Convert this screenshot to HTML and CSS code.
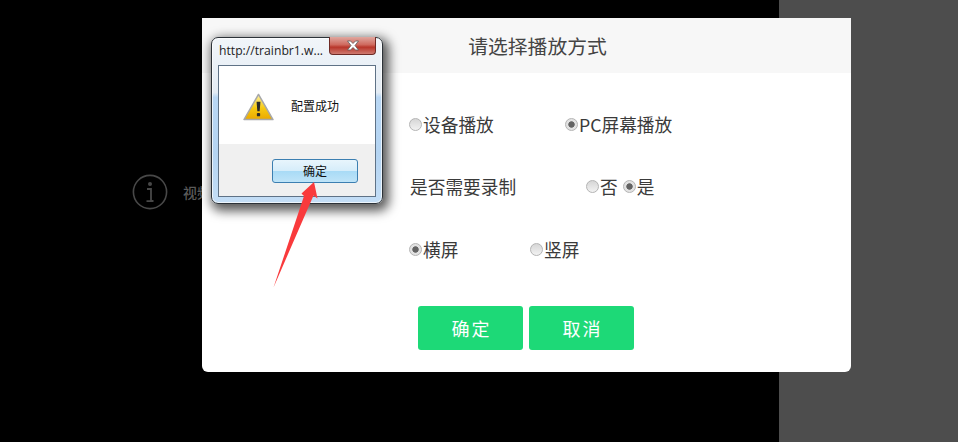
FILE: index.html
```html
<!DOCTYPE html>
<html lang="zh-CN">
<head>
<meta charset="utf-8">
<title>请选择播放方式</title>
<link rel="stylesheet" href="styles.css">
</head>
<body>
<div class="page">
  <main class="stage">
    <div class="notice">
      <svg class="notice-icon" viewBox="0 0 36 36" aria-hidden="true">
        <circle cx="18" cy="18" r="16.6" fill="none" stroke="#484848" stroke-width="1.6"/>
        <circle cx="18" cy="10" r="2" fill="#484848"/>
        <path d="M15 15h4v12h2.500M14.500 27.200h7" fill="none" stroke="#484848" stroke-width="1.800"/>
      </svg>
      <span class="notice-text">视频未开始</span>
    </div>
  </main>
  <aside class="side"></aside>

  <section class="modal">
    <h1 class="modal-title">请选择播放方式</h1>
    <div class="modal-body">
      <div class="row row-one">
        <label class="opt opt-device"><input type="radio" name="mode">设备播放</label>
        <label class="opt"><input type="radio" name="mode" checked>PC屏幕播放</label>
      </div>
      <div class="row row-two">
        <span class="row-label">是否需要录制</span>
        <label class="opt opt-no"><input type="radio" name="rec">否</label>
        <label class="opt"><input type="radio" name="rec" checked>是</label>
      </div>
      <div class="row row-three">
        <label class="opt opt-land"><input type="radio" name="dir" checked>横屏</label>
        <label class="opt"><input type="radio" name="dir">竖屏</label>
      </div>
    </div>
    <div class="actions">
      <button class="btn" type="button">确定</button>
      <button class="btn" type="button">取消</button>
    </div>
  </section>

  <div class="alert">
    <div class="alert-bar">
      <span class="alert-title">http://trainbr1.w...</span>
      <span class="alert-close">
        <svg viewBox="0 0 14 11" class="close-x" aria-hidden="true">
          <path d="M1.500 1h3l2.500 2.500L9.500 1h3L9 5.500l3.500 4.500h-3L7 7.500 4.500 10h-3L5 5.500z" fill="#fff" stroke="#5a5a5a" stroke-width=".8"/>
        </svg>
      </span>
    </div>
    <div class="alert-panel">
      <div class="alert-content">
        <svg class="warn" viewBox="0 0 32 29" aria-hidden="true">
          <defs>
            <linearGradient id="warnFill" x1="0" y1="0" x2="0" y2="1">
              <stop offset="0" stop-color="#fff3a0"/>
              <stop offset=".55" stop-color="#f6c911"/>
              <stop offset="1" stop-color="#eaa800"/>
            </linearGradient>
          </defs>
          <path d="M16 1.500 31 27.500H1z" fill="url(#warnFill)" stroke="#a8a8a8" stroke-width="1.600" stroke-linejoin="round"/>
          <path d="M14 9h4l-.8 10h-2.400z" fill="#2a2a2a"/>
          <rect x="14.300" y="20.600" width="3.400" height="3.600" rx="1" fill="#2a2a2a"/>
        </svg>
        <span class="alert-msg">配置成功</span>
      </div>
      <div class="alert-foot">
        <button class="alert-btn" type="button">确定</button>
      </div>
    </div>
  </div>

  <svg class="arrow" viewBox="0 0 958 442" aria-hidden="true">
    <path d="M314 182 317.500 198.500 313.500 195.500 273.500 287.500 304 196 301.500 193.500z" fill="#f93a3c"/>
  </svg>
</div>
</body>
</html>
```

FILE: styles.css
```css
* { box-sizing: border-box; }
html, body { margin: 0; height: 100%; }
body {
  overflow: hidden;
  font-family: "Noto Sans CJK SC", "Noto Sans", sans-serif;
}
.page {
  position: relative;
  display: flex;
  width: 958px;
  height: 442px;
  background: #000;
}
.stage {
  width: 779px;
  background: #000;
  padding: 174px 0 0 132px;
}
.side {
  flex: 1;
  background: #4d4d4d;
}
.notice {
  display: flex;
  align-items: center;
  gap: 15px;
}
.notice-icon { width: 36px; height: 36px; }
.notice-text {
  color: #5a5a5a;
  font-size: 14px;
  font-weight: 500;
  white-space: nowrap;
}

.modal {
  position: absolute;
  left: 202px;
  top: 18px;
  width: 649px;
  height: 354px;
  background: #fff;
  border-radius: 0 0 6px 6px;
}
.modal-title {
  margin: 0;
  height: 55px;
  padding-left: 22px;
  background: #f7f7f7;
  color: #444;
  font-size: 19.800px;
  font-weight: 400;
  line-height: 55px;
  text-align: center;
}
.modal-body {
  display: flex;
  flex-direction: column;
  padding: 38px 0 0 207px;
  gap: 36px;
}
.row {
  display: flex;
  align-items: center;
  height: 26px;
  color: #3a3a3a;
  font-size: 17.700px;
  line-height: 26px;
}
.row-three { margin-top: 1px; }
.opt { display: flex; align-items: center; }
.opt input {
  appearance: none;
  flex: none;
  width: 13px;
  height: 13px;
  margin: 0 1px 0 0;
  border: 1px solid #b4b4b4;
  border-radius: 50%;
  background: linear-gradient(#d6d6d6, #f2f2f2);
}
.opt input:checked {
  background: radial-gradient(circle, #636363 0, #636363 2.800px, #e2e2e2 3.600px);
}
.opt-device { width: 156px; }
.row-label { width: 177px; padding-left: 1px; }
.opt-no { margin-right: 5px; }
.opt-land { width: 121px; }

.actions {
  display: flex;
  gap: 6px;
  padding: 44px 0 0 216px;
}
.btn {
  width: 105px;
  height: 44px;
  padding: 0 0 0 2px;
  border: 0;
  border-radius: 3px;
  background: #1dd977;
  color: #fff;
  font-family: inherit;
  font-size: 18px;
  letter-spacing: 2px;
}

.alert {
  position: absolute;
  left: 211px;
  top: 37px;
  width: 172px;
  height: 167px;
  padding: 0 6px 6px 6px;
  display: flex;
  flex-direction: column;
  border: 1px solid #2c3238;
  border-radius: 7px;
  background: linear-gradient(#f1f5f9 0, #e4ecf4 33%, #b9d7f4 36%, #b4d4f2 70%, #c4def6 100%);
  box-shadow: inset 0 0 0 1px rgba(255, 255, 255, .7), 3px 4px 11px 3px rgba(0, 0, 0, .65);
}
.alert-bar {
  display: flex;
  justify-content: space-between;
  height: 27px;
  flex: none;
}
.alert-title {
  padding: 4px 0 0 1px;
  color: #1d1d1d;
  font-family: "Open Sans", sans-serif;
  font-size: 12.200px;
  line-height: 18px;
  white-space: nowrap;
}
.alert-close {
  display: flex;
  align-items: center;
  justify-content: center;
  width: 47px;
  height: 18px;
  margin-top: -1px;
  border: 1px solid #6e2a25;
  border-top: 0;
  border-radius: 0 0 4px 4px;
  background: linear-gradient(#e0a79f 0, #cf6a5e 45%, #b8362a 60%, #cf7a70 100%);
}
.close-x { width: 14px; height: 11px; }
.alert-panel {
  flex: 1;
  display: flex;
  flex-direction: column;
  border: 1px solid #5f7286;
  background: #f0f0f0;
}
.alert-content {
  display: flex;
  align-items: center;
  height: 78px;
  padding-left: 24px;
  background: #fff;
}
.warn { width: 31px; height: 28px; margin: 3px 17px 0 0; }
.alert-msg {
  color: #111;
  font-size: 12px;
}
.alert-foot {
  display: flex;
  justify-content: flex-end;
  padding: 15px 17px 0 0;
}
.alert-btn {
  width: 86px;
  height: 24px;
  padding: 0 0 2px;
  border: 1px solid #3c7fb1;
  border-radius: 3px;
  background: linear-gradient(#e8f5fc 0, #d6edfa 48%, #a9dbf6 52%, #bfe4f8 100%);
  color: #111;
  font-family: inherit;
  font-size: 12px;
}
.arrow {
  position: absolute;
  left: 0;
  top: 0;
  width: 958px;
  height: 442px;
  pointer-events: none;
}
```
